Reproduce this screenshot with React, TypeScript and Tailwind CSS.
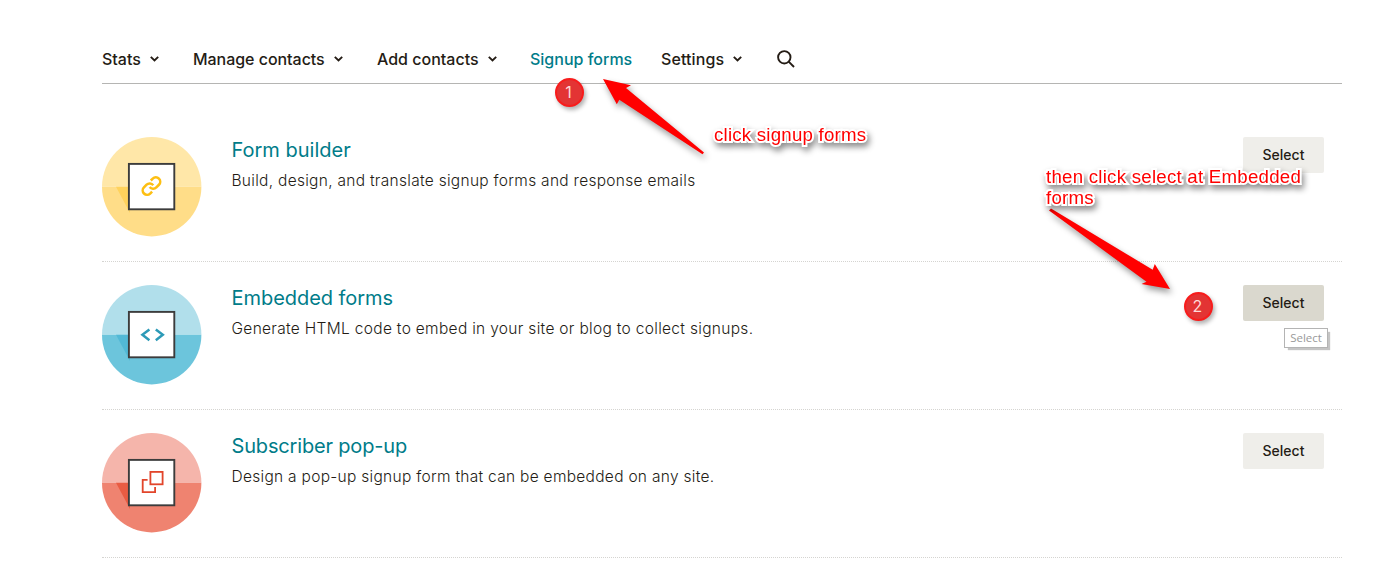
import type { ReactNode } from "react";

function Chevron() {
  return (
    <svg width="9" height="6" viewBox="0 0 9 6" fill="none" stroke="#241c15" strokeWidth="1.9" className="ml-[9px] shrink-0">
      <path d="M0.8 0.9 4.5 4.5 8.2 0.9" />
    </svg>
  );
}

type Tone = { top: string; bottom: string; shade: string };

function Badge({ tone, children }: { tone: Tone; children: ReactNode }) {
  return (
    <svg width="100" height="100" viewBox="0 0 100 100" fill="none" className="shrink-0">
      <path d="M0 49.7a49.7 49.7 0 0 1 99.4 0z" fill={tone.top} />
      <path d="M0 49.7a49.7 49.7 0 0 0 99.4 0z" fill={tone.bottom} />
      <path d="M14 49.7H28V76z" fill={tone.shade} />
      <rect x="26.9" y="26.9" width="45.4" height="45.4" fill="#fff" stroke="#3c3c3c" strokeWidth="1.9" />
      {children}
    </svg>
  );
}

const rows = [
  {
    title: "Form builder",
    titleClass: "tracking-[0px]",
    text: "Build, design, and translate signup forms and response emails",
    textClass: "tracking-[0.29px]",
    button: "bg-[#efeeea]",
    tone: { top: "#ffe7a8", bottom: "#ffdd88", shade: "#ffd25c" },
    icon: (
      <g transform="translate(38.9 38.5) scale(0.88)" stroke="#fdbf12" strokeWidth="2.9">
        <path d="M10 13a5 5 0 0 0 7.54.54l3-3a5 5 0 0 0-7.07-7.07l-2.2 2.2" />
        <path d="M14 11a5 5 0 0 0-7.54-.54l-3 3a5 5 0 0 0 7.07 7.07l2.2-2.2" />
      </g>
    ),
  },
  {
    title: "Embedded forms",
    titleClass: "tracking-[-0.05px]",
    text: "Generate HTML code to embed in your site or blog to collect signups.",
    textClass: "tracking-[0.31px]",
    button: "bg-[#dad8ce]",
    tone: { top: "#b1dfeb", bottom: "#6cc5dc", shade: "#52b9d6" },
    icon: (
      <g stroke="#2c9ab7" strokeWidth="2.5">
        <path d="M47.4 44.4 40.4 49.8 47.4 55.2M53.8 44.4 60.8 49.8 53.8 55.2" />
      </g>
    ),
  },
  {
    title: "Subscriber pop-up",
    titleClass: "tracking-[-0.17px]",
    text: "Design a pop-up signup form that can be embedded on any site.",
    textClass: "tracking-[0.29px]",
    button: "bg-[#efeeea]",
    tone: { top: "#f5b5ab", bottom: "#ef8370", shade: "#e95c43" },
    icon: (
      <g stroke="#e2452b" strokeWidth="1.8">
        <rect x="48.4" y="38.9" width="12.2" height="12.4" />
        <path d="M45.6 46.8H40.7V59.2H53.1V54" />
      </g>
    ),
  },
];

const markers = [
  { label: "1", place: "left-[555px] top-[78px]" },
  { label: "2", place: "left-[1184px] top-[292px]" },
];

export default function App() {
  return (
    <div className="relative h-[561px] w-[1381px] overflow-hidden bg-white font-['Inter','Liberation_Sans',sans-serif] text-[#241c15]">
      <div className="ml-[102px] w-[1240px]">
        <nav className="flex h-[84px] items-center border-b border-[#b5b5b3] pt-[34px] text-[16px] font-medium">
          <a className="flex w-[91px] items-center">Stats<Chevron /></a>
          <a className="flex w-[184px] items-center tracking-[-0.04px]">Manage contacts<Chevron /></a>
          <a className="flex w-[153px] items-center">Add contacts<Chevron /></a>
          <a className="w-[131px] text-[#007c89]">Signup forms</a>
          <a className="flex w-[116px] items-center tracking-[0.1px]">Settings<Chevron /></a>
          <svg width="18" height="18" viewBox="0 0 18 18" fill="none" stroke="#241c15" strokeWidth="1.9">
            <circle cx="7.3" cy="7.3" r="6.2" />
            <path d="M11.7 11.7 17 17" />
          </svg>
        </nav>
        <main className="pt-[30px]">
          {rows.map((row) => (
            <section key={row.title} className="flex h-[148px] items-start border-b border-dotted border-[#d5d4d1] pt-[23px]">
              <Badge tone={row.tone}>{row.icon}</Badge>
              <div className="ml-[29.5px] grow">
                <h2 className={`text-[20px] leading-[26px] text-[#007c89] ${row.titleClass}`}>{row.title}</h2>
                <p className={`mt-[6px] text-[15.5px] font-light leading-[24px] ${row.textClass}`}>{row.text}</p>
              </div>
              <button className={`mr-[18px] h-[36px] w-[81px] rounded-[2px] pb-[2px] text-[14px] font-medium ${row.button}`}>Select</button>
            </section>
          ))}
        </main>
      </div>

      <svg width="1381" height="561" viewBox="0 0 1381 561" className="pointer-events-none absolute left-0 top-0 drop-shadow-[2px_4px_3px_rgba(0,0,0,0.4)]">
        <path d="M603 79 631 85.3 626 88 704 152.6 702.5 154.2 619.3 99.8 616.8 104.3z" fill="#f00" />
        <path d="M1170 289 1141.5 284 1146.5 281.7 1049 210.5 1051 208.5 1152.7 269.8 1154.8 264z" fill="#f00" />
      </svg>
      {markers.map((marker) => (
        <div key={marker.label} className={`absolute flex size-[29px] items-center justify-center rounded-full border-2 border-[#f81c1c] bg-[#e33434] pb-[2px] pr-[2px] text-[16px] text-[#ffd9d9] shadow-[2px_3px_4px_rgba(0,0,0,0.3)] ${marker.place}`}>{marker.label}</div>
      ))}
      <p className="absolute left-[714px] top-[124px] whitespace-nowrap font-['Liberation_Sans',sans-serif] text-[18.67px] leading-[21px] tracking-[0.22px] text-[#f00] [filter:drop-shadow(2px_4px_3px_rgba(0,0,0,0.45))] [paint-order:stroke_fill] [-webkit-text-stroke:4px_#fff]">click signup forms</p>
      <p className="absolute left-[1046px] top-[166px] whitespace-nowrap font-['Liberation_Sans',sans-serif] text-[18.67px] leading-[21px] tracking-[0.25px] text-[#f00] [filter:drop-shadow(2px_4px_3px_rgba(0,0,0,0.45))] [paint-order:stroke_fill] [-webkit-text-stroke:4px_#fff]">then click select at Embedded<br />forms</p>
      <div className="absolute left-[1284px] top-[328px] flex h-[20px] w-[44px] items-center justify-center border border-[#b4b4b4] bg-white font-['Open_Sans','Noto_Sans',sans-serif] text-[11.5px] text-[#999] shadow-[3px_3px_1px_-1px_#c4c4c4]">Select</div>
    </div>
  );
}
